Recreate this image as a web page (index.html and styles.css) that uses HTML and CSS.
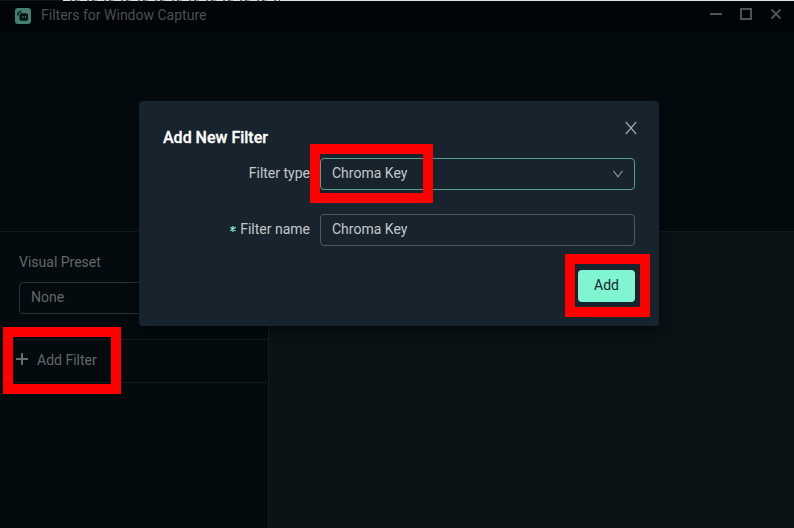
FILE: index.html
```html
<!DOCTYPE html>
<html lang="en">
<head>
<meta charset="utf-8">
<title>Filters for Window Capture</title>
<link rel="stylesheet" href="styles.css">
</head>
<body>
<div class="window">
  <div class="backdrop-strip"><span class="strip-specks"></span></div>
  <header class="titlebar">
    <svg class="logo" width="16" height="16" viewBox="0 0 16 16">
      <rect width="16" height="16" rx="3" fill="#437f70"/>
      <path d="M2.800 7Q2.800 3.800 6 3.700" fill="none" stroke="#06130f" stroke-width="1.300" stroke-linecap="round"/>
      <rect x="4.500" y="5.300" width="8.500" height="7.500" rx="1.800" fill="#06130f"/>
      <path d="M8 8v2M10.500 8v2" stroke="#437f70" stroke-width="1"/>
    </svg>
    <h1 class="window-title">Filters for Window Capture</h1>
    <div class="window-controls">
      <svg width="12" height="12" viewBox="0 0 12 12"><path d="M0 6h12" stroke="#4f5355" stroke-width="2"/></svg>
      <svg width="12" height="12" viewBox="0 0 12 12"><rect x="1" y="1" width="10" height="10" fill="none" stroke="#4f5355" stroke-width="2"/></svg>
      <svg width="12" height="12" viewBox="0 0 12 12"><path d="M1.500 1.500l9 9M10.500 1.500l-9 9" stroke="#4f5355" stroke-width="2"/></svg>
    </div>
  </header>
  <div class="preview"></div>
  <main class="content">
    <aside class="sidebar">
      <section class="preset">
        <div class="preset-label">Visual Preset</div>
        <div class="preset-select">None</div>
      </section>
      <div class="add-filter">
        <svg class="plus" width="12" height="12" viewBox="0 0 12 12"><path d="M0 6h12M6 0v12" stroke="#6a6d6e" stroke-width="2"/></svg>
        <span>Add Filter</span>
      </div>
    </aside>
    <div class="details"></div>
  </main>
</div>

<div class="modal">
  <div class="modal-head">
    <h2 class="modal-title">Add New Filter</h2>
    <svg class="modal-close" width="12" height="14" viewBox="0 0 12 14"><path d="M.8 1l10.400 12M11.200 1L.8 13" fill="none" stroke="#a0a5a8" stroke-width="1.200"/></svg>
  </div>
  <div class="field">
    <label>Filter type</label>
    <div class="control select">
      <span>Chroma Key</span>
      <svg width="10" height="8" viewBox="0 0 10 8"><path d="M.5 .8L5 6.800L9.500 .8" fill="none" stroke="#8b9296" stroke-width="1.200"/></svg>
    </div>
  </div>
  <div class="field">
    <label><svg class="required" width="6" height="6" viewBox="0 0 6 6"><path d="M3 0v6M.3 1.200l5.400 3.600M5.700 1.200L.3 4.800" stroke="#80f5d2" stroke-width="1.200"/></svg>Filter name</label>
    <div class="control"><span>Chroma Key</span></div>
  </div>
  <div class="actions"><button class="add-button">Add</button></div>
</div>

<div class="highlight highlight-type"></div>
<div class="highlight highlight-add"></div>
<div class="highlight highlight-filter"></div>
</body>
</html>
```
FILE: styles.css
```css
* {
  box-sizing: border-box;
}

body {
  margin: 0;
  overflow: hidden;
  background: #030b0e;
  font: 14px/20px Roboto, sans-serif;
}

svg {
  display: block;
  flex: none;
}

.window {
  display: flex;
  flex-direction: column;
  height: 528px;
  color: #646768;
}

.backdrop-strip {
  height: 1px;
  flex: none;
  padding-left: 63px;
  background: linear-gradient(90deg, #0b171d 63px, #dce3df 63px);
}

.strip-specks {
  display: block;
  width: 217px;
  height: 1px;
  background: repeating-linear-gradient(90deg, #dce3df 0 7px, #776c66 7px 9px, #c9d5d7 9px 12px, #48575b 12px 14px, #b0a294 14px 17px);
}

.titlebar {
  display: flex;
  align-items: center;
  height: 30px;
  flex: none;
  padding: 0 12px 1px 15px;
  background: #010507;
}

.window-title {
  margin: 0 0 1px 10px;
  font-size: 14px;
  line-height: 20px;
  font-weight: 400;
  color: #4b4e4f;
}

.window-controls {
  display: flex;
  gap: 18px;
  margin: 0 0 3px auto;
}

.preview {
  height: 200px;
  flex: none;
}

.content {
  display: flex;
  flex: 1;
  border-top: 1px solid #13191c;
}

.sidebar {
  width: 269px;
  border-right: 1px solid #161d20;
}

.preset {
  height: 108px;
  padding: 20px 19px 0;
  border-bottom: 1px solid #13191c;
}

.preset-select {
  height: 32px;
  margin-top: 10px;
  padding: 4px 11px;
  border: 1px solid #2b3335;
  border-radius: 4px;
}

.add-filter {
  display: flex;
  align-items: center;
  gap: 9px;
  height: 43px;
  padding: 0 16px 2px;
  border-bottom: 1px solid #13191c;
}

.plus {
  margin-bottom: 2px;
}

.details {
  flex: 1;
  background: #0a1215;
}

.modal {
  position: absolute;
  top: 101px;
  left: 139px;
  width: 520px;
  height: 225px;
  padding: 20px 24px 24px;
  border-radius: 4px;
  background: #17242d;
  box-shadow: 0 4px 12px rgba(0, 0, 0, .5);
  color: #c4c8ca;
}

.modal-head {
  display: flex;
  justify-content: space-between;
  height: 37px;
}

.modal-title {
  margin: 5px 0 0;
  font-size: 16px;
  line-height: 24px;
  font-weight: 500;
  color: #fff;
  -webkit-text-stroke: .3px #fff;
}

.modal-close {
  margin-right: -2px;
}

.field {
  display: flex;
  height: 32px;
  margin-bottom: 24px;
}

.field label {
  display: flex;
  justify-content: flex-end;
  width: 147px;
  margin-right: 10px;
  padding-top: 5px;
}

.required {
  margin: 7px 4px 0 0;
}

.control {
  display: flex;
  justify-content: space-between;
  flex: 1;
  padding: 4px 11px;
  border: 1px solid #4f5a60;
  border-radius: 4px;
}

.select {
  border-color: #5a9e90;
}

.select svg {
  margin-top: 7px;
}

.actions {
  display: flex;
  justify-content: flex-end;
}

.add-button {
  width: 57px;
  height: 32px;
  padding: 0 0 2px;
  border: 0;
  border-radius: 4px;
  background: #80f5d2;
  color: #17242d;
  font: 14px/20px Roboto, sans-serif;
}

/* Callout frames laid over the controls */
.highlight {
  position: absolute;
  border: 10px solid #f00;
}

.highlight-type {
  top: 144px;
  left: 310px;
  width: 123px;
  height: 59px;
}

.highlight-add {
  top: 254px;
  left: 565px;
  width: 85px;
  height: 63px;
}

.highlight-filter {
  top: 327px;
  left: 3px;
  width: 118px;
  height: 67px;
}
```
